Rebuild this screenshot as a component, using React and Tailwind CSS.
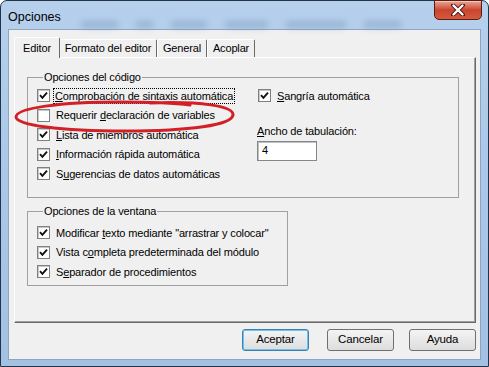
import React from 'react';

// Casilla de verificación estilo Windows clásico
const Casilla = ({ checked }) => (
  <span className="w-[13px] h-[13px] shrink-0 border border-[#808080] bg-white shadow-[inset_1px_1px_0_#c8c8c8] flex items-center justify-center">
    {checked && (
      <svg width="9" height="9" viewBox="0 0 9 9">
        <path d="M1 4.2 L3.4 6.8 L8 1.6" stroke="#111" strokeWidth="1.9" fill="none" />
      </svg>
    )}
  </span>
);

// Fila con casilla y texto (con letra de acceso subrayada)
const Opcion = ({ checked = true, pre, key1, post, focus }) => (
  <div className="h-[19.5px] flex items-center gap-[6px] whitespace-nowrap">
    <Casilla checked={checked} />
    <span className={focus ? 'outline-1 outline-dotted outline-black px-[1px] -ml-[2px] leading-[14px]' : ''}>
      {pre}<u className="underline-offset-1">{key1}</u>{post}
    </span>
  </div>
);

const Boton = ({ children, def }) => (
  <button
    className={
      'w-[67px] h-[22px] rounded-[3px] bg-gradient-to-b from-[#f4f4f4] to-[#dddddd] text-[11.5px] text-black border ' +
      (def ? 'border-[#3c7fb1] shadow-[inset_0_0_0_1px_#6fc3f0]' : 'border-[#707070]')
    }
  >
    {children}
  </button>
);

export default function App() {
  return (
    <div className="relative w-[489px] h-[367px] overflow-hidden font-['Liberation_Sans',Arial,sans-serif] text-[11px] tracking-[-0.15px] text-black">
      <div className="w-full h-full flex flex-col px-[7px] pb-[6px] border border-[#23344a] rounded-t-[7px] bg-gradient-to-b from-[#b6d0ec] via-[#aac7e8] to-[#a3c1e2]">
        {/* Barra de título */}
        <div className="h-[28px] flex items-start relative">
          <span className="mt-[7px] text-[12.5px] tracking-normal text-black">Opciones</span>
          <div className="flex items-center gap-[18px] ml-[20px] mt-[20px] opacity-40">
            <span className="w-[37px] h-[7px] bg-[#6f8db0] blur-[3px]" />
            <span className="w-[17px] h-[7px] bg-[#6f8db0] blur-[3px]" />
            <span className="w-[36px] h-[7px] bg-[#6f8db0] blur-[3px]" />
            <span className="w-[43px] h-[7px] bg-[#6f8db0] blur-[3px]" />
            <span className="w-[60px] h-[7px] bg-[#6f8db0] blur-[3px]" />
            <span className="w-[37px] h-[7px] bg-[#6f8db0] blur-[3px]" />
          </div>
          <div className="ml-auto -mr-[1px] -mt-[1px] w-[48px] h-[20px] rounded-b-[5px] border border-[#5b1a12] bg-gradient-to-b from-[#e9a595] via-[#c9442f] to-[#d55a3f] shadow-[inset_0_1px_0_#f6c8bc] flex items-center justify-center">
            <svg width="14" height="12" viewBox="0 0 14 12">
              <path d="M2 1 L12 11 M12 1 L2 11" stroke="#4a1510" strokeWidth="4" strokeLinecap="round" />
              <path d="M2.5 1.5 L11.5 10.5 M11.5 1.5 L2.5 10.5" stroke="#fff" strokeWidth="2.4" strokeLinecap="round" />
            </svg>
          </div>
        </div>

        {/* Área cliente */}
        <div className="flex-1 bg-[#f0f0f0] border border-[#8fa5bf] flex flex-col pt-[7px] pl-[5px] pr-[4px]">
          {/* Pestañas */}
          <div className="flex items-end h-[20px] relative z-10 whitespace-nowrap">
            <div className="w-[46px] h-[21px] -mb-px bg-[#f0f0f0] border-l border-t border-white border-r border-r-[#696969] rounded-t-[2px] flex items-center justify-center">
              Editor
            </div>
            <div className="w-[97px] h-[18px] border-t border-white border-r border-r-[#696969] rounded-t-[2px] flex items-center justify-center">
              Formato del editor
            </div>
            <div className="w-[50px] h-[18px] border-l border-t border-white border-r border-r-[#696969] rounded-t-[2px] flex items-center justify-center">
              General
            </div>
            <div className="w-[48px] h-[18px] border-l border-t border-white border-r border-r-[#696969] rounded-t-[2px] flex items-center justify-center">
              Acoplar
            </div>
          </div>

          {/* Panel */}
          <div className="w-[462px] h-[266px] border-l border-t border-white border-r border-b border-r-[#696969] border-b-[#696969] shadow-[inset_-1px_-1px_0_#a0a0a0] pl-[12px] pt-[12px]">
            <fieldset className="w-[432px] h-[128px] border border-[#a0a0a0] pl-[9px] pt-[2px]">
              <legend className="ml-[6px] px-[1px] leading-[14px]">Opciones del código</legend>
              <div className="flex">
                <div className="w-[221px]">
                  <Opcion pre="" key1="C" post="omprobación de sintaxis automática" focus />
                  <Opcion checked={false} pre="Requerir " key1="d" post="eclaración de variables" />
                  <Opcion pre="" key1="L" post="ista de miembros automática" />
                  <Opcion pre="" key1="I" post="nformación rápida automática" />
                  <Opcion pre="S" key1="u" post="gerencias de datos automáticas" />
                </div>
                <div className="flex flex-col">
                  <Opcion pre="" key1="S" post="angría automática" />
                  <div className="mt-[18px] leading-[14px] -ml-[1px] whitespace-nowrap">
                    <u className="underline-offset-1">A</u>ncho de tabulación:
                  </div>
                  <div className="mt-[3px] -ml-[1px] w-[60px] h-[20px] bg-white border border-[#828790] shadow-[inset_1px_1px_0_#c0c0c0] pl-[4px] flex items-center">
                    4
                  </div>
                </div>
              </div>
            </fieldset>

            <fieldset className="mt-[6px] w-[261px] h-[82px] border border-[#a0a0a0] pl-[9px] pt-[5px]">
              <legend className="ml-[6px] px-[1px] leading-[14px]">Opciones de la ventana</legend>
              <Opcion pre="Modificar " key1="t" post={'exto mediante "arrastrar y colocar"'} />
              <Opcion pre="Vista c" key1="o" post="mpleta predeterminada del módulo" />
              <Opcion pre="S" key1="e" post="parador de procedimientos" />
            </fieldset>
          </div>

          {/* Botones */}
          <div className="flex justify-end mt-[6px]">
            <Boton def>Aceptar</Boton>
            <div className="ml-[18px]">
              <Boton>Cancelar</Boton>
            </div>
            <div className="ml-[15px]">
              <Boton>Ayuda</Boton>
            </div>
          </div>
        </div>
      </div>

      {/* Óvalo rojo dibujado a mano sobre la captura */}
      <svg className="absolute inset-0 pointer-events-none" width="489" height="367" viewBox="0 0 489 367">
        <path
          d="M150 103 C 200 101, 234 106, 233 115 C 232 125, 190 131, 125 131 C 60 131, 16 125, 16 117 C 16 108, 60 102, 120 102 C 150 102, 175 103, 190 105"
          stroke="#d31f26"
          strokeWidth="3"
          fill="none"
          strokeLinecap="round"
        />
      </svg>
    </div>
  );
}
